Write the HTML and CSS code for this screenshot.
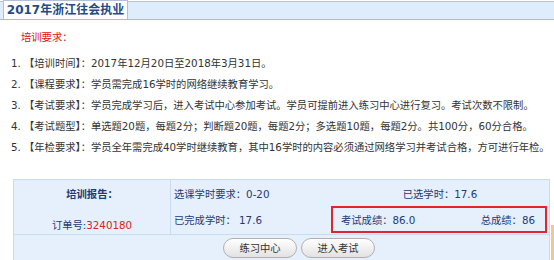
FILE: index.html
```
<!DOCTYPE html>
<html lang="zh-CN">
<head>
    <meta charset="UTF-8">
    <title>2017年浙江往会执业</title>
    <link rel="stylesheet" href="styles.css">
</head>
<body>
    <div class="tabbar">
        <div class="tab">2017年浙江往会执业</div>
    </div>
    <p class="req-title">培训要求：</p>
    <ol class="rules">
        <li>【培训时间】：2017年12月20日至2018年3月31日。</li>
        <li>【课程要求】：学员需完成16学时的网络继续教育学习。</li>
        <li>【考试要求】：学员完成学习后，进入考试中心参加考试。学员可提前进入练习中心进行复习。考试次数不限制。</li>
        <li>【考试题型】：单选题20题，每题2分；判断题20题，每题2分；多选题10题，每题2分。共100分，60分合格。</li>
        <li>【年检要求】：学员全年需完成40学时继续教育，其中16学时的内容必须通过网络学习并考试合格，方可进行年检。</li>
    </ol>
    <div class="report">
        <div class="report-top">
            <div class="report-left">
                <div class="report-name">培训报告：</div>
                <div class="order">订单号:<span class="red">3240180</span></div>
            </div>
            <div class="report-right">
                <div class="row first">
                    <div class="cell">选课学时要求：0-20</div>
                    <div class="cell center">已选学时：17.6</div>
                </div>
                <div class="row">
                    <div class="cell">已完成学时： 17.6</div>
                    <div class="scorebox">
                        <span>考试成绩：86.0</span>
                        <span>总成绩：86</span>
                    </div>
                </div>
            </div>
        </div>
        <div class="actions">
            <div class="btn">练习中心</div>
            <div class="btn">进入考试</div>
        </div>
    </div>
    <div class="edge"></div>
</body>
</html>
```
FILE: styles.css
```
body {
    margin: 0;
    font-family: "DejaVu Sans", "Noto Sans CJK SC", sans-serif;
    font-size: 10.3px;
    color: #333;
    background: #fff;
    position: relative;
    height: 260px;
    overflow: hidden;
}
.tabbar {
    height: 17px;
    margin-top: 1px;
    border-top: 1px solid #b9c2cf;
    border-bottom: 1px solid #a9bad6;
    background: #deecfc;
    padding-left: 3px;
}
.tab {
    display: inline-block;
    width: 125px;
    height: 19px;
    margin-top: -2px;
    background: #fff;
    border: 1px solid #b3c0d3;
    border-bottom: none;
    box-sizing: border-box;
    text-align: center;
    line-height: 19px;
    font-weight: bold;
    font-size: 12px;
    color: #254a86;
    white-space: nowrap;
}
.req-title {
    margin: 9px 0 0 21px;
    color: #e01010;
    line-height: 16px;
}
.rules {
    margin: 8px 0 0 0;
    padding-left: 24px;
}
.rules li {
    line-height: 21px;
    white-space: nowrap;
}
.report {
    margin: 21px 4px 0 13px;
    background: #e6f0fc;
    border: 1px solid #c8dbf1;
    color: #1f3a76;
}
.report-top {
    display: flex;
    height: 54px;
    border-bottom: 1px solid #c8dbf1;
}
.report-left {
    width: 156px;
    border-right: 1px solid #c8dbf1;
    text-align: center;
}
.report-name {
    font-weight: bold;
    margin-top: 6px;
    line-height: 16px;
}
.order {
    margin-top: 15px;
    line-height: 16px;
}
.red {
    color: #e02020;
}
.report-right {
    flex: 1;
    display: flex;
    flex-direction: column;
}
.row {
    display: flex;
    height: 27px;
    align-items: center;
}
.row.first {
    height: 25px;
    padding-top: 1px;
}
.cell {
    width: 157px;
    padding-left: 3px;
}
.cell.center {
    flex: 1;
    text-align: center;
    padding-left: 0;
}
.scorebox {
    width: 216px;
    height: 27px;
    box-sizing: border-box;
    border: 2px solid #e0262a;
    display: flex;
    justify-content: space-between;
    align-items: center;
    padding: 0 10px 0 8px;
}
.actions {
    display: flex;
    gap: 4px;
    padding: 3px 0 0 209px;
    height: 24px;
}
.btn {
    width: 72px;
    height: 18px;
    line-height: 18px;
    text-align: center;
    border: 1px solid #b0b0b0;
    border-radius: 10px;
    background: linear-gradient(#ffffff, #e2e2e2);
    color: #333;
}
.edge {
    position: absolute;
    left: 551px;
    top: 225px;
    width: 3px;
    height: 40px;
    background: #f0c890;
}
```
